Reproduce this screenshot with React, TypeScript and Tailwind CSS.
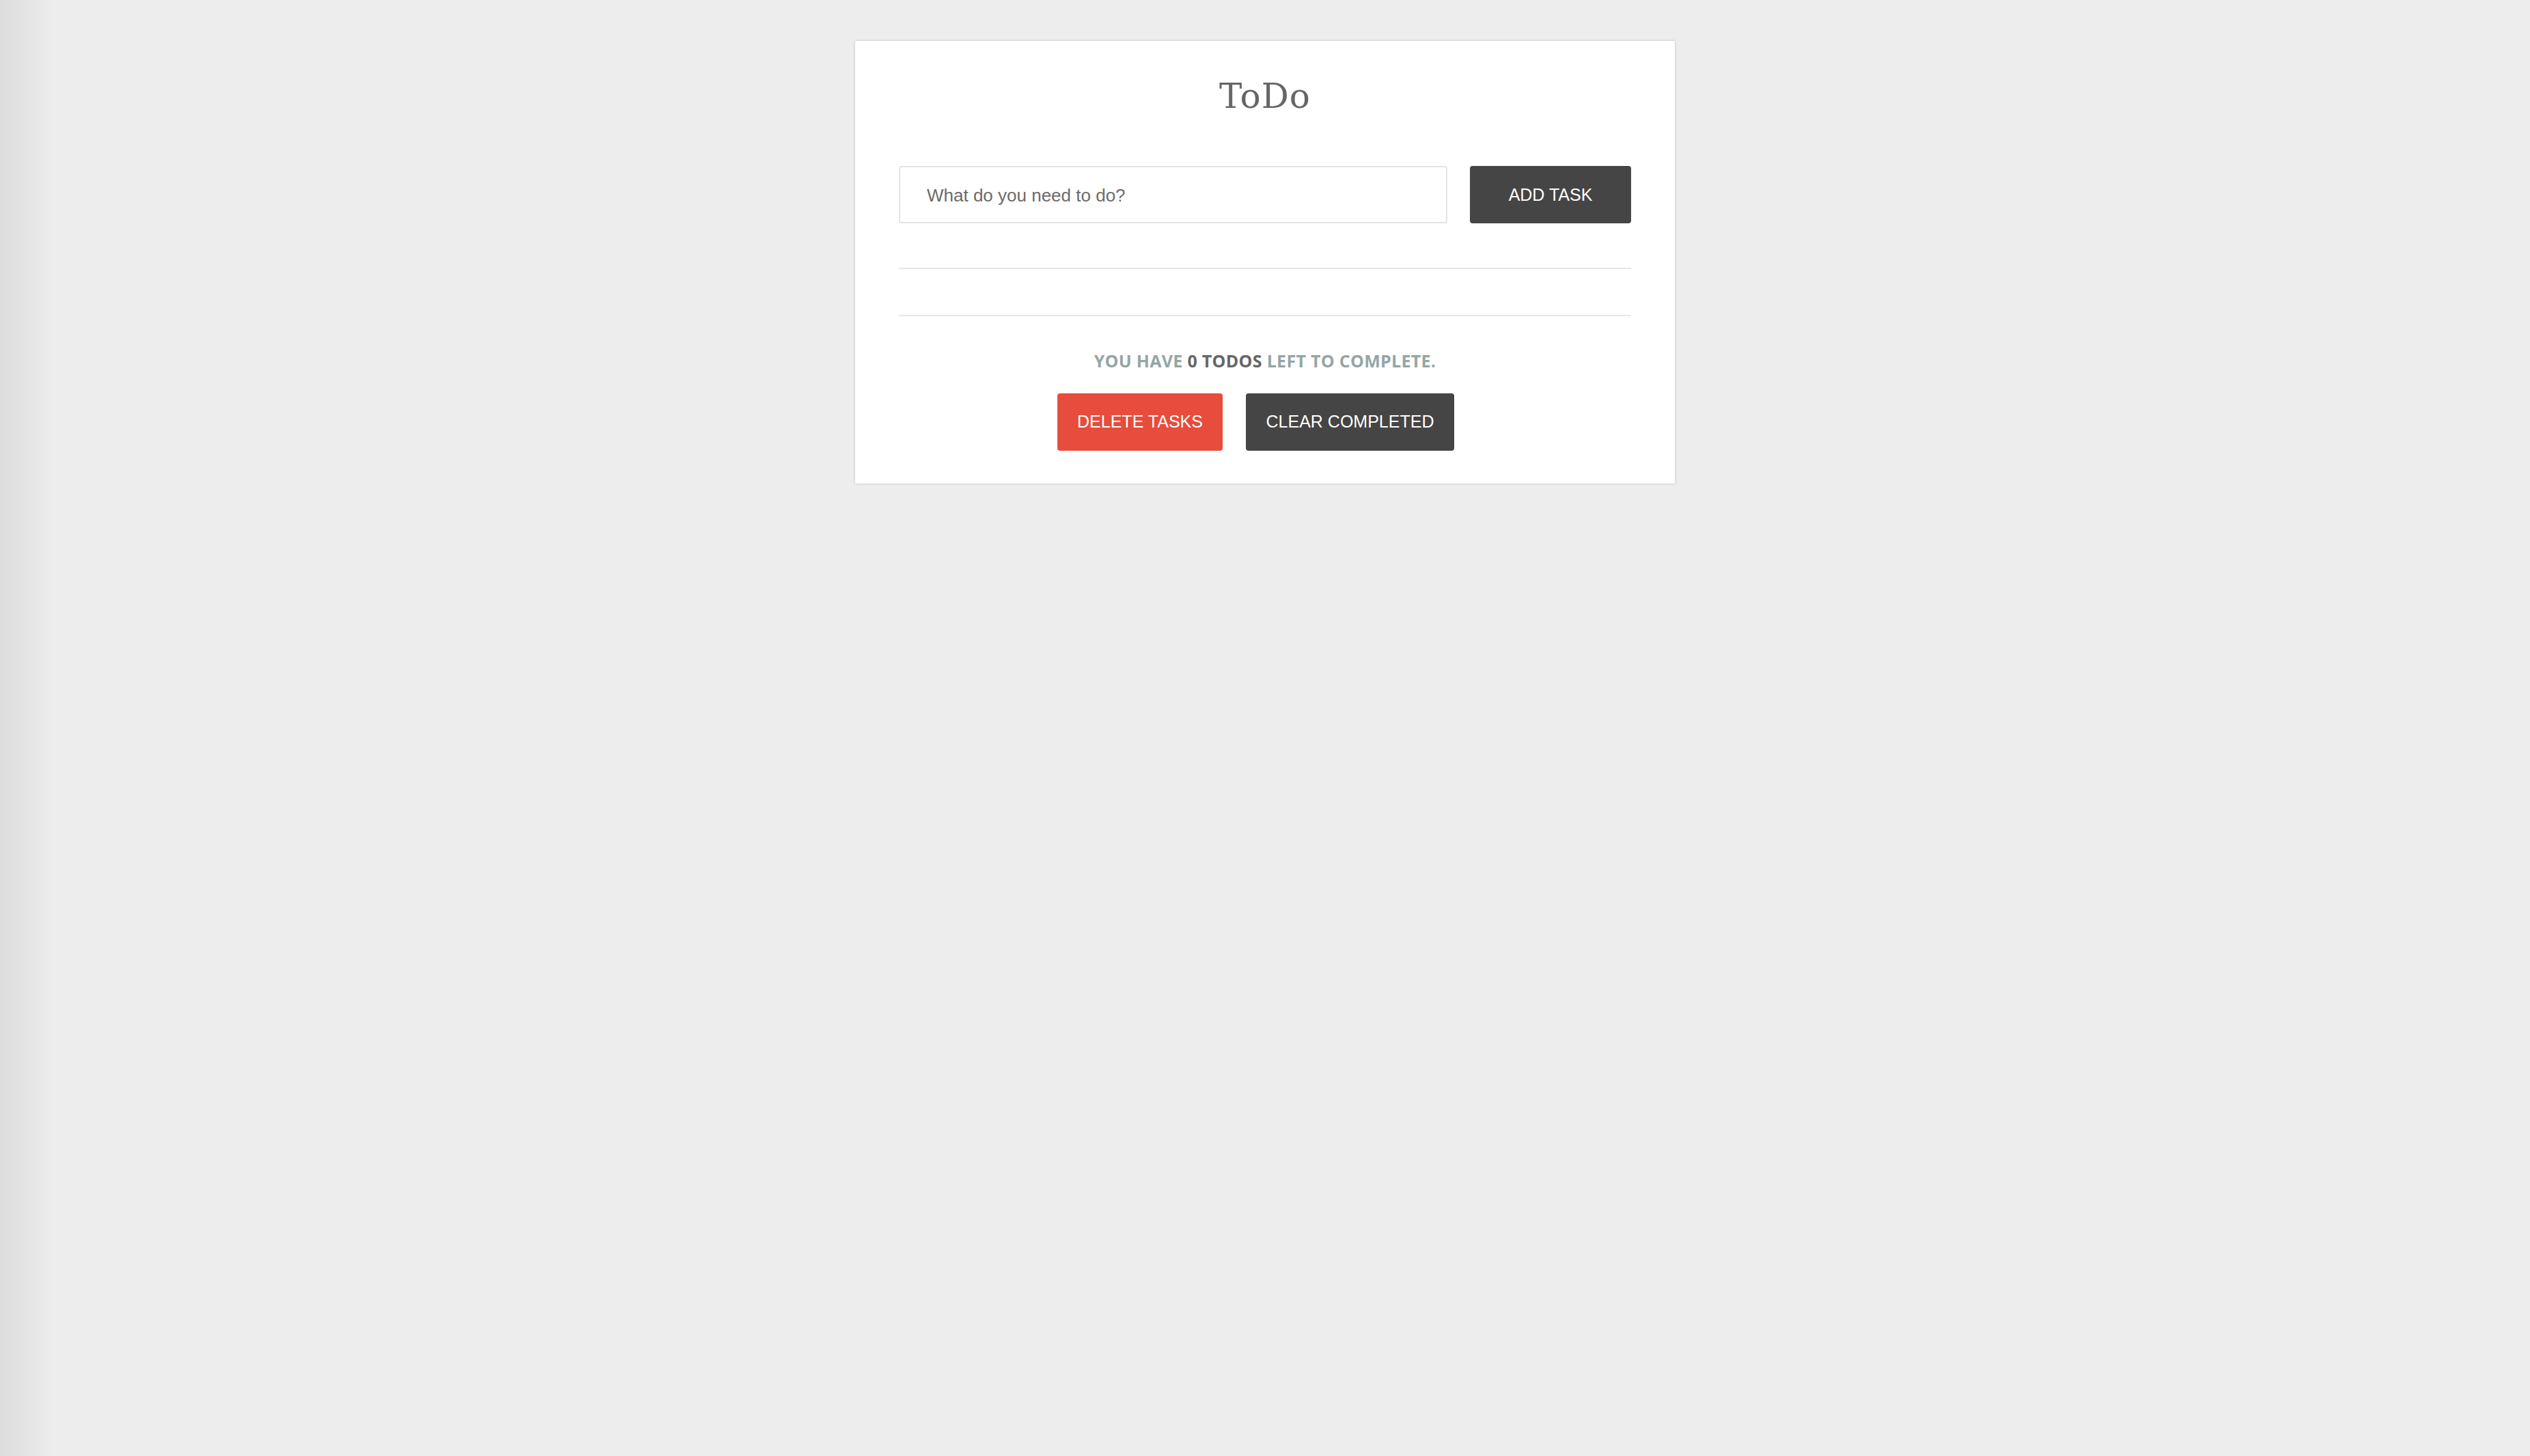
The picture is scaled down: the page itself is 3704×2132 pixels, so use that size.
import { useState } from 'react';

export default function App() {
  const [task, setTask] = useState('');
  const todos: string[] = [];

  return (
    <div className="min-h-[2132px] w-full bg-[#ededed] bg-[linear-gradient(to_right,#dcdcdc_0px,#ededed_80px)] pt-[60px]">
      <div className="mx-auto w-[1200px] bg-white px-[64px] pt-[57px] pb-[48px] shadow-[0_0_4px_rgba(0,0,0,0.18)]">
        <h1 className="text-center font-['DejaVu_Serif',serif] text-[50px] leading-[48px] tracking-[1px] text-[#666666]">
          ToDo
        </h1>

        <div className="mt-[78px] flex items-center justify-between">
          <input
            value={task}
            onChange={(e) => setTask(e.target.value)}
            placeholder="What do you need to do?"
            className="h-[84px] w-[803px] rounded-[4px] border-2 border-[#e4e4e4] bg-white px-[39px] pt-[2px] font-['Liberation_Sans',sans-serif] text-[26px] text-[#555] outline-none placeholder:text-[#6b6b6b]"
          />
          <button className="h-[84px] w-[236px] rounded-[4px] bg-[#454545] pt-[2px] font-['Liberation_Sans',sans-serif] text-[25px] text-white">
            ADD TASK
          </button>
        </div>

        {/* Task list (empty) */}
        <ul className="mt-[65px] h-[71px] border-y-2 border-[#e6e6e6]">
          {todos.map((t) => (
            <li key={t}>{t}</li>
          ))}
        </ul>

        <p className="mt-[49px] text-center font-['Open_Sans',sans-serif] text-[25px] font-bold leading-[32px] tracking-[0.3px] text-[#95a5a6]">
          YOU HAVE <span className="text-[#666666]">0 TODOS</span> LEFT TO COMPLETE.
        </p>

        <div className="mt-[32px] flex justify-center gap-[34px] pr-[27px]">
          <button className="h-[84px] w-[242px] rounded-[4px] bg-[#e74c3c] font-['Liberation_Sans',sans-serif] text-[25px] text-white">
            DELETE TASKS
          </button>
          <button className="h-[84px] w-[305px] rounded-[4px] bg-[#454545] font-['Liberation_Sans',sans-serif] text-[25px] text-white">
            CLEAR COMPLETED
          </button>
        </div>
      </div>
    </div>
  );
}
